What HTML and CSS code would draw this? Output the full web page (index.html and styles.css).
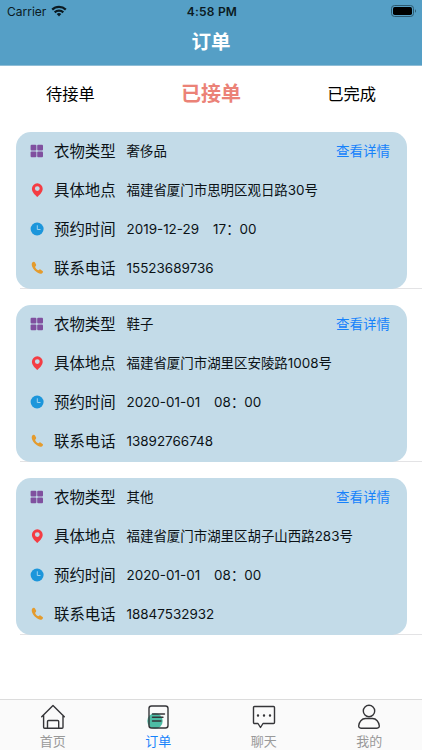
FILE: index.html
```html
<!DOCTYPE html>
<html lang="zh-CN">
<head>
    <meta charset="UTF-8">
    <title>订单</title>
    <meta name="viewport" content="width=device-width, initial-scale=1">
    <link rel="stylesheet" href="styles.css">
</head>
<body>
    <!-- Shared icons for the order cards -->
    <svg class="sprite">
        <symbol id="icon-type" viewBox="0 0 14 14">
            <g fill="#80509f">
                <rect x=".6" y=".8" width="5.8" height="5.8" rx="1"/>
                <rect x="7.2" y=".8" width="5.8" height="5.8" rx="1"/>
                <rect x=".6" y="7.4" width="5.8" height="5.8" rx="1"/>
                <rect x="7.2" y="7.4" width="5.8" height="5.8" rx="1"/>
            </g>
        </symbol>
        <symbol id="icon-place" viewBox="0 0 14 14">
            <path fill="#f43c43" fill-rule="evenodd" d="M7.3.3A5.4 5.4 0 0 0 1.900 5.700c0 3.500 3.300 6.200 5.400 8.200 2.100-2 5.400-4.700 5.400-8.200A5.400 5.400 0 0 0 7.300.3zM7.300 3.200a2.400 2.400 0 1 1 0 4.800 2.400 2.400 0 0 1 0-4.800z"/>
        </symbol>
        <symbol id="icon-time" viewBox="0 0 14 14">
            <circle cx="7.1" cy="7" r="6.500" fill="#1c96db"/>
            <path d="M7.300 3.300V7.500H10.500" fill="none" stroke="#9fd3ef" stroke-width="1"/>
        </symbol>
        <symbol id="icon-phone" viewBox="0 0 14 14">
            <path fill="#e49b2d" d="M2 1.900C2.700.8 4.400.5 5 1.400L6.200 3.800C6.400 4.600 5.300 5.300 5.100 6c.5 1.500 1.700 2.700 3.200 3.200.8-.1 1.300-1 2.100-.8l2.200 1.500c.9.700.2 1.900-.8 2.500-1.400.8-3.900-.1-6.100-2.100C3.300 8.100.9 4.300 2 1.900z"/>
        </symbol>
    </svg>

    <header class="header">
        <div class="status">
            <div class="carrier">
                <span>Carrier</span>
                <svg class="wifi" viewBox="0 0 16 12">
                    <g fill="none" stroke="#0b1a22" stroke-width="2.2">
                        <path d="M1.200 4.600a9.700 9.700 0 0 1 13.600 0"/>
                        <path d="M3.700 7.400a6.100 6.100 0 0 1 8.600 0"/>
                    </g>
                    <path fill="#0b1a22" d="M5.700 9.100a3.300 3.300 0 0 1 4.600 0L8 11.600z"/>
                </svg>
            </div>
            <div class="clock">4:58 PM</div>
            <svg class="battery" viewBox="0 0 26 12">
                <rect x=".5" y=".5" width="22" height="11" rx="3" fill="none" stroke="#2d596f"/>
                <rect x="2" y="2" width="19" height="8" rx="1.700" fill="#000"/>
                <path d="M24 4.200v3.600c1.300-.6 1.300-3 0-3.600z" fill="#2d596f"/>
            </svg>
        </div>
        <h1>订单</h1>
    </header>

    <nav class="filters">
        <a>待接单</a>
        <a class="current">已接单</a>
        <a>已完成</a>
    </nav>

    <main class="orders">
        <section class="order">
            <div class="card">
                <div class="row">
                    <svg class="icon"><use href="#icon-type"/></svg>
                    <span class="label">衣物类型</span>
                    <span class="value">奢侈品</span>
                    <a class="detail">查看详情</a>
                </div>
                <div class="row">
                    <svg class="icon"><use href="#icon-place"/></svg>
                    <span class="label">具体地点</span>
                    <span class="value">福建省厦门市思明区观日路30号</span>
                </div>
                <div class="row">
                    <svg class="icon"><use href="#icon-time"/></svg>
                    <span class="label">预约时间</span>
                    <span class="value">2019-12-29<span class="hour">17：00</span></span>
                </div>
                <div class="row">
                    <svg class="icon"><use href="#icon-phone"/></svg>
                    <span class="label">联系电话</span>
                    <span class="value">15523689736</span>
                </div>
            </div>
        </section>
        <section class="order">
            <div class="card">
                <div class="row">
                    <svg class="icon"><use href="#icon-type"/></svg>
                    <span class="label">衣物类型</span>
                    <span class="value">鞋子</span>
                    <a class="detail">查看详情</a>
                </div>
                <div class="row">
                    <svg class="icon"><use href="#icon-place"/></svg>
                    <span class="label">具体地点</span>
                    <span class="value">福建省厦门市湖里区安陵路1008号</span>
                </div>
                <div class="row">
                    <svg class="icon"><use href="#icon-time"/></svg>
                    <span class="label">预约时间</span>
                    <span class="value">2020-01-01<span class="hour">08：00</span></span>
                </div>
                <div class="row">
                    <svg class="icon"><use href="#icon-phone"/></svg>
                    <span class="label">联系电话</span>
                    <span class="value">13892766748</span>
                </div>
            </div>
        </section>
        <section class="order">
            <div class="card">
                <div class="row">
                    <svg class="icon"><use href="#icon-type"/></svg>
                    <span class="label">衣物类型</span>
                    <span class="value">其他</span>
                    <a class="detail">查看详情</a>
                </div>
                <div class="row">
                    <svg class="icon"><use href="#icon-place"/></svg>
                    <span class="label">具体地点</span>
                    <span class="value">福建省厦门市湖里区胡子山西路283号</span>
                </div>
                <div class="row">
                    <svg class="icon"><use href="#icon-time"/></svg>
                    <span class="label">预约时间</span>
                    <span class="value">2020-01-01<span class="hour">08：00</span></span>
                </div>
                <div class="row">
                    <svg class="icon"><use href="#icon-phone"/></svg>
                    <span class="label">联系电话</span>
                    <span class="value">18847532932</span>
                </div>
            </div>
        </section>
    </main>

    <!-- Bottom tab bar -->
    <nav class="tabbar">
        <a>
            <svg viewBox="0 0 26 26">
                <path d="M1.700 12.800 13 1.500 24.300 12.800M3.600 11.200V23.200a1 1 0 0 0 1 1H22a1 1 0 0 0 1-1V11.200M7.500 24V17.500a1 1 0 0 1 1-1h9.200a1 1 0 0 1 1 1V24"/>
            </svg>
            <span>首页</span>
        </a>
        <a class="active">
            <svg viewBox="0 0 26 26">
                <circle class="dot" cx="10" cy="17" r="7.700"/>
                <rect x="4" y="2" width="19" height="22" rx="2.500"/>
                <path d="M7.500 10H19.500M7.500 13.300H18M7.500 17H16"/>
            </svg>
            <span>订单</span>
        </a>
        <a>
            <svg viewBox="0 0 26 26">
                <path d="M3.500 2.500H22.500a1 1 0 0 1 1 1V18.500a1 1 0 0 1-1 1H12L9.500 23.500 7 19.500H3.500a1 1 0 0 1-1-1V3.500a1 1 0 0 1 1-1z"/>
                <path class="dots" d="M7 11.500h.01M13 11.500h.01M19 11.500h.01"/>
            </svg>
            <span>聊天</span>
        </a>
        <a>
            <svg viewBox="0 0 26 26">
                <circle cx="13" cy="7" r="5.700"/>
                <path d="M9.500 14.500h7c3.700 0 6.500 3.500 6.800 7.300.1 1.600-.8 2.400-2.300 2.400H5c-1.500 0-2.400-.8-2.300-2.400.3-3.800 3.100-7.300 6.800-7.300z"/>
            </svg>
            <span>我的</span>
        </a>
    </nav>
</body>
</html>
```
FILE: styles.css
```css
* {
    box-sizing: border-box;
}
body {
    display: flex;
    flex-direction: column;
    height: 750px;
    margin: 0;
    overflow: hidden;
    font-family: Inter, "Noto Sans CJK SC", sans-serif;
    color: #0b1216;
    background-color: #fff;
}
.sprite {
    display: none;
}
.header {
    height: 66px;
    background-color: #559fc6;
    border-bottom: 1px solid #8fbdd6;
}
.status {
    display: grid;
    grid-template-columns: 1fr auto 1fr;
    align-items: center;
    height: 22px;
    padding: 0 5px 0 7px;
    font-size: 12px;
    color: #0b1a22;
}
.carrier {
    display: flex;
    align-items: center;
    gap: 5px;
}
.wifi {
    width: 16px;
    height: 12px;
}
.clock {
    font-weight: 600;
    letter-spacing: 0.2px;
}
.battery {
    justify-self: end;
    width: 26px;
    height: 12px;
}
h1 {
    margin: 0;
    font-size: 19.5px;
    font-weight: 700;
    line-height: 40px;
    text-align: center;
    color: #fff;
}
.filters {
    display: grid;
    grid-template-columns: repeat(3, 1fr);
    align-items: center;
    height: 55px;
    font-size: 16.3px;
    line-height: 24px;
    text-align: center;
    color: #000;
}
.filters .current {
    font-size: 20px;
    font-weight: 700;
    color: #eb8277;
}
.orders {
    flex: 1;
    padding-top: 11px;
}
.order {
    height: 157px;
    margin-bottom: 16px;
    padding: 0 15.5px;
    background: linear-gradient(#e3e3e5, #e3e3e5) 20px 100% / 100% 1px no-repeat;
}
.card {
    height: 157px;
    border-radius: 15px;
    background-color: #c3dbe8;
}
.row {
    display: flex;
    align-items: center;
    height: 38.75px;
    padding: 0 16.5px 0 14.5px;
    line-height: 24px;
}
.icon {
    width: 14px;
    height: 14px;
}
.label {
    width: 72.5px;
    margin-left: 10px;
    padding-top: 2px;
    font-size: 15.4px;
}
.value {
    font-size: 13.45px;
    white-space: nowrap;
}
.hour {
    margin-left: 14px;
}
.detail {
    margin-left: auto;
    font-size: 13.5px;
    color: #1682fb;
}
.tabbar {
    display: grid;
    grid-template-columns: repeat(4, 1fr);
    height: 51px;
    border-top: 1px solid #dcdcdc;
    background-color: #fafafa;
}
.tabbar a {
    display: flex;
    flex-direction: column;
    align-items: center;
    padding-top: 4px;
    font-size: 13px;
    line-height: 18px;
    color: #999;
}
.tabbar .active {
    color: #1682fb;
}
.tabbar svg {
    width: 26px;
    height: 26px;
    margin-bottom: 2px;
    fill: none;
    stroke: #353538;
    stroke-width: 1.4;
    stroke-linecap: round;
    stroke-linejoin: round;
}
.tabbar .dot {
    fill: #4dbda5;
    stroke: none;
}
.tabbar .dots {
    stroke-width: 2.4;
}
```
